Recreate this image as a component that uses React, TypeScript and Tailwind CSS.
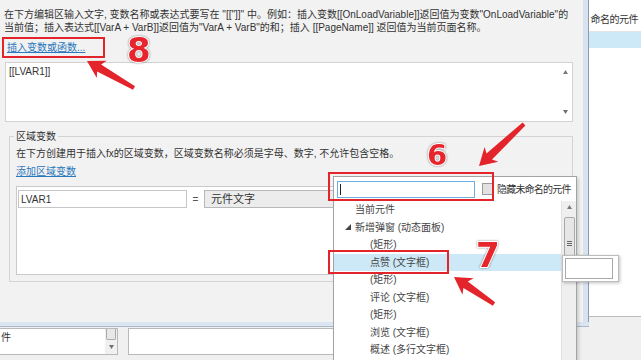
import React from "react";

function arrowPts(tx: number, ty: number, hx: number, hy: number, headLen = 17, headW = 10, neckW = 4, tailW = 2) {
  const dx = hx - tx, dy = hy - ty, L = Math.hypot(dx, dy);
  const ux = dx / L, uy = dy / L, px = -uy, py = ux;
  const bx = hx - ux * headLen, by = hy - uy * headLen;
  const nx = bx + ux * 3, ny = by + uy * 3;
  const pts = [
    [tx + px * tailW, ty + py * tailW],
    [nx + px * neckW, ny + py * neckW],
    [bx + px * headW, by + py * headW],
    [hx, hy],
    [bx - px * headW, by - py * headW],
    [nx - px * neckW, ny - py * neckW],
    [tx - px * tailW, ty - py * tailW],
  ];
  return pts.map((p) => p.map((v) => v.toFixed(1)).join(",")).join(" ");
}

function Up() {
  return (
    <svg width="5" height="4" viewBox="0 0 5 4">
      <path d="M0 4 L2.5 0 L5 4 Z" fill="#7a7a7a" />
    </svg>
  );
}
function Down() {
  return (
    <svg width="5" height="4" viewBox="0 0 5 4">
      <path d="M0 0 L5 0 L2.5 4 Z" fill="#6f6f6f" />
    </svg>
  );
}

export default function App() {
  return (
    <div className="relative w-[641px] h-[360px] overflow-hidden bg-[#f0f0f0] [font-family:'Liberation_Sans','Noto_Sans_CJK_SC',sans-serif] text-[10px] leading-[13px] text-[#333]">
      <div className="grid grid-cols-[589px_52px] grid-rows-[327px_33px] h-full">
        {/* Dialog */}
        <div className="flex flex-col">
          <div className="flex flex-1 min-h-0">
            <div className="flex-1 bg-[#f2f2f2] flex flex-col pt-[8px]">
              <p className="pl-[4px] whitespace-nowrap">
                在下方编辑区输入文字, 变数名称或表达式要写在 "[["]]" 中。例如：插入变数[[OnLoadVariable]]返回值为变数"OnLoadVariable"的
              </p>
              <p className="pl-[4px] whitespace-nowrap">
                当前值；插入表达式[[VarA + VarB]]返回值为"VarA + VarB"的和；插入 [[PageName]] 返回值为当前页面名称。
              </p>
              <div className="ml-[7px] mt-[7px]">
                <span className="text-[#2a78bd] underline">插入变数或函数...</span>
              </div>
              <div className="ml-[5px] mt-[8px] w-[568px] h-[60px] bg-white border border-[#d2d2d2] flex">
                <div className="flex-1 pl-[3px] pt-[2px]">[[LVAR1]]</div>
                <div className="w-[14px] flex flex-col items-center justify-between py-[7px]">
                  <Up />
                  <Down />
                </div>
              </div>
              <fieldset className="ml-[9px] mt-[8px] w-[564px] border border-[#d3d3d3] pl-[6px] pb-[6px]">
                <legend className="-ml-[2px] px-[2px]">区域变数</legend>
                <p className="mt-[4px] whitespace-nowrap">
                  在下方创建用于插入fx的区域变数，区域变数名称必须是字母、数字, 不允许包含空格。
                </p>
                <div className="mt-[5px]">
                  <span className="text-[#2a78bd] underline">添加区域变数</span>
                </div>
                <div className="mt-[8px] w-[549px] h-[89px] bg-white border border-[#cacaca] pl-[1px] pt-[3px]">
                  <div className="flex items-center">
                    <div className="w-[169px] h-[18px] border border-[#c6c6c6] bg-white flex items-center pl-[2px]">
                      LVAR1
                    </div>
                    <div className="w-[17px] text-center text-[#555]">=</div>
                    <div className="w-[130px] h-[18px] border border-[#b8b8b8] bg-[#ececec] flex items-center pl-[6px] text-[11px]">
                      元件文字
                    </div>
                  </div>
                </div>
              </fieldset>
            </div>
            <div className="w-[6px] bg-[#d9e3ef] border-r border-[#8b9cb1]" />
          </div>
          <div className="h-[5px] bg-[#dbe5f1] border-b border-[#aab8c9]" />
        </div>

        {/* Right background panel */}
        <div className="row-span-2 flex flex-col">
          <div className="h-[317px] bg-white border-b border-[#bcbcbc] flex flex-col">
            <div className="h-[32px] border-b border-[#e4e4e4] flex justify-end pt-[13px] pr-[3px] whitespace-nowrap">
              <span className="tracking-[-0.5px]">命名的元件</span>
            </div>
            <div className="h-[16px] bg-[#cde8f6]" />
          </div>
        </div>

        {/* Bottom background strip */}
        <div className="flex items-start pt-[1px]">
          <div className="w-[118px] h-[27px] bg-white border-y border-r border-[#b9b9b9] flex">
            <div className="flex-1 pt-[2px] pl-[1px]">件</div>
            <div className="w-[12px] flex flex-col items-center bg-[#f0f0f0]">
              <div className="w-[10px] h-[11px] rounded-b-[2px] border-x border-b border-[#a9a9a9] bg-[#e8e8e8]" />
              <div className="mt-[5px]">
                <Down />
              </div>
            </div>
          </div>
          <div className="ml-[10px] w-[449px] h-[27px] bg-white border border-[#b9b9b9]" />
        </div>
      </div>

      {/* Dropdown popup */}
      <div className="absolute left-[333px] top-[176px] w-[244px] h-[190px] bg-white border border-[#a3a3a3] shadow-[2px_2px_3px_rgba(0,0,0,0.15)] flex flex-col">
        <div className="h-[24px] flex items-start pt-[4px] pl-[3px]">
          <div className="w-[138px] h-[17px] border border-[#6aaee2] bg-white flex items-center pl-[2px]">
            <div className="w-px h-[11px] bg-[#222]" />
          </div>
          <div className="ml-[7px] mt-[2px] w-[12px] h-[12px] border border-[#9b9b9b] bg-[#e2e2e2]" />
          <span className="ml-[3px] mt-[2px] whitespace-nowrap tracking-[-0.8px]">隐藏未命名的元件</span>
        </div>
        <div className="flex flex-1 min-h-0">
          <div className="flex-1 flex flex-col text-[#444]">
            <div className="h-[17.5px] flex items-center pl-[21px]">当前元件</div>
            <div className="h-[17.5px] flex items-center pl-[11px]">
              <svg width="6" height="6" viewBox="0 0 6 6">
                <path d="M6 0 L6 6 L0 6 Z" fill="#444" />
              </svg>
              <span className="ml-[4px]">新增弹窗 (动态面板)</span>
            </div>
            <div className="h-[17.5px] flex items-center pl-[36px]">(矩形)</div>
            <div className="h-[17.5px] flex items-center pl-[36px] bg-[#cde8f6]">点赞 (文字框)</div>
            <div className="h-[17.5px] flex items-center pl-[36px]">(矩形)</div>
            <div className="h-[17.5px] flex items-center pl-[36px]">评论 (文字框)</div>
            <div className="h-[17.5px] flex items-center pl-[36px]">(矩形)</div>
            <div className="h-[17.5px] flex items-center pl-[36px]">浏览 (文字框)</div>
            <div className="h-[17.5px] flex items-center pl-[36px]">概述 (多行文字框)</div>
          </div>
          <div className="w-[15px] bg-[#efefef] border-l border-[#e2e2e2] flex flex-col items-center pt-[4px]">
            <Up />
            <div className="mt-[8px] w-[11px] h-[52px] rounded-[2px] border border-[#a8a8a8] bg-[#e6e6e6] flex flex-col items-center justify-center gap-[1px]">
              <div className="w-[5px] h-px bg-[#666]" />
              <div className="w-[5px] h-px bg-[#666]" />
              <div className="w-[5px] h-px bg-[#666]" />
            </div>
          </div>
        </div>
      </div>

      {/* small tooltip box */}
      <div className="absolute left-[562px] top-[255px] w-[57px] h-[27px] bg-white border border-[#bdbdbd] shadow-[1px_1px_3px_rgba(0,0,0,0.25)] p-[2px]">
        <div className="w-[48px] h-[21px] border border-[#a9a9a9] bg-white" />
      </div>

      {/* red annotation boxes */}
      <div className="absolute left-[2px] top-[37px] w-[103px] h-[21px] border-2 border-[#e3242b]" />
      <div className="absolute left-[328px] top-[172px] w-[166px] h-[29px] border-2 border-[#e3242b]" />
      <div className="absolute left-[328px] top-[250px] w-[121px] h-[24px] border-2 border-[#e3242b]" />

      {/* numbers */}
      <div className="absolute left-[127px] top-[33px] text-[34px] leading-none font-bold text-[#e6252c] [font-family:'DejaVu_Sans',sans-serif] [-webkit-text-stroke:2px_#fff] [paint-order:stroke_fill] drop-shadow-[0_0_1px_rgba(0,0,0,0.45)]">
        8
      </div>
      <div className="absolute left-[427px] top-[141px] text-[29px] leading-none font-bold text-[#e6252c] [font-family:'DejaVu_Sans',sans-serif] [-webkit-text-stroke:2px_#fff] [paint-order:stroke_fill] drop-shadow-[0_0_1px_rgba(0,0,0,0.45)]">
        6
      </div>
      <div className="absolute left-[476px] top-[238px] text-[34px] leading-none font-bold text-[#e6252c] [font-family:'DejaVu_Sans',sans-serif] [-webkit-text-stroke:2px_#fff] [paint-order:stroke_fill] drop-shadow-[0_0_1px_rgba(0,0,0,0.45)]">
        7
      </div>

      {/* arrows */}
      <svg className="absolute left-0 top-0 pointer-events-none" width="641" height="360" viewBox="0 0 641 360">
        <polygon points={arrowPts(134, 88, 87, 61)} fill="#e3242b" />
        <polygon points={arrowPts(524, 124, 479, 166)} fill="#e3242b" />
        <polygon points={arrowPts(494, 304, 454, 277)} fill="#e3242b" />
      </svg>
    </div>
  );
}
